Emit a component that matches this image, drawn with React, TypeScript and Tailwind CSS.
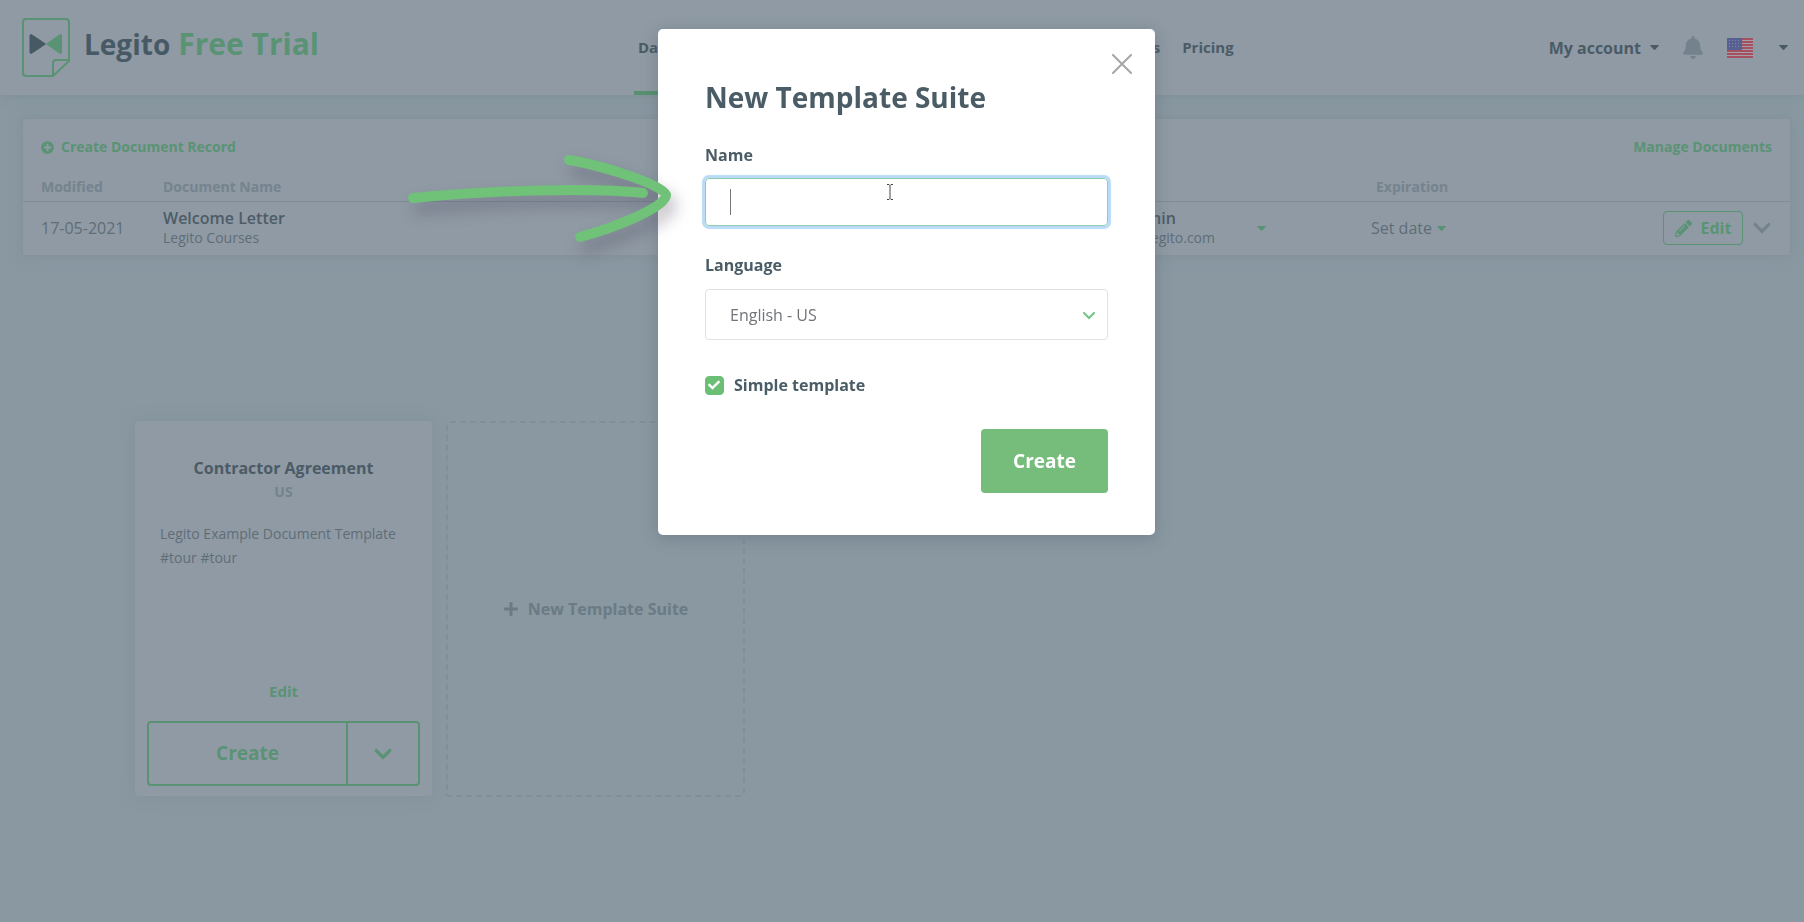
import { useState } from "react";
import { FaBell, FaCheck, FaChevronDown, FaPencilAlt, FaPlus, FaPlusCircle } from "react-icons/fa";

const languages = ["English - US", "English - UK", "Deutsch", "Čeština"];

function Caret({ className }: { className?: string }) {
    return (
        <svg viewBox="0 0 10 6" preserveAspectRatio="none" className={"h-[5px] w-[9px] shrink-0 " + (className ?? "")} fill="currentColor" aria-hidden="true">
            <path d="M0.6 0h8.8c.5 0 .7.6.4.9L5.6 5.6a.8.8 0 0 1-1.2 0L.2.9C-.1.6.1 0 .6 0z" />
        </svg>
    );
}

function Logo() {
    return (
        <a href="#" className="flex items-start">
            <svg viewBox="0 0 48 60" className="h-[60px] w-[48px]" fill="none" aria-hidden="true">
                <path
                    d="M4 1h40a3 3 0 0 1 3 3v39L31 58H4a3 3 0 0 1-3-3V4a3 3 0 0 1 3-3z M47 42H34a3 3 0 0 0-3 3v13"
                    stroke="#5a9374"
                    strokeWidth="2"
                    strokeLinejoin="round"
                />
                <path d="M8 17.500v17a1 1 0 0 0 1.600.800L23.500 26 9.600 16.700A1 1 0 0 0 8 17.500z" fill="#485966" stroke="#485966" strokeLinejoin="round" />
                <path d="M39.500 17.500v17a1 1 0 0 1-1.600.800L24.500 26l13.400-9.300a1 1 0 0 1 1.600.800z" fill="#5a9374" stroke="#5a9374" strokeLinejoin="round" />
            </svg>
            <span className="ml-[14px] flex items-baseline gap-2 text-[28px] leading-[52px] font-bold text-[#485966]">
                Legito <span className="text-[30px] text-[#5a9374]">Free Trial</span>
            </span>
        </a>
    );
}

function UsFlag() {
    return (
        <svg viewBox="0 0 26 20" className="h-[20px] w-[26px]" aria-hidden="true">
            <rect width="26" height="20" fill="#a59daa" />
            {[0, 3, 6, 9, 12, 15, 18].map((y) => (
                <rect key={y} y={y} width="26" height="2" fill="#a4505f" />
            ))}
            <rect width="15" height="12" fill="#566192" />
            {[2, 5, 8].map((y) => (
                <path key={y} d={`M2 ${y + 0.5}h12`} stroke="#7f87a8" strokeDasharray="1 2" />
            ))}
        </svg>
    );
}

function Header() {
    return (
        <header className="flex h-[95px] justify-between bg-[#8f9aa4] pr-[16px] pl-[22px] text-[#4b5b66] shadow-[0_2px_10px_#80919a]">
            <div className="pt-[18px]">
                <Logo />
            </div>
            <nav className="flex items-stretch text-[15px] font-bold">
                <a href="#" className="mr-4 border-b-4 border-[#58906f] px-1 pt-[36px]">Dashboard</a>
                <div className="flex w-[494px] justify-end gap-[22px] pt-[36px]">
                    <a href="#">Documents</a>
                    <a href="#">Templates</a>
                    <a href="#">Pricing</a>
                </div>
            </nav>
            <div className="flex h-[95px] items-center">
                <button className="flex items-center gap-[9px] text-base font-bold">
                    My account <Caret />
                </button>
                <button aria-label="Notifications" className="ml-6 text-[#74828d]">
                    <FaBell className="h-[23px] w-[20px]" />
                </button>
                <button aria-label="Change language" className="ml-6 flex items-center gap-[26px]">
                    <UsFlag /> <Caret />
                </button>
            </div>
        </header>
    );
}

function Documents() {
    return (
        <section className="mt-[23px] mr-[13px] ml-[22px] rounded-[3px] border border-[#87939c] bg-[#8f9aa4] shadow-[0_0_14px_#80919a]">
            <div className="flex h-[56px] items-center justify-between px-[18px] text-sm font-bold text-[#5a9374]">
                <button className="flex items-center gap-[7px]">
                    <FaPlusCircle className="size-[13px]" /> Create Document Record
                </button>
                <a href="#">Manage Documents</a>
            </div>
            <table className="w-full table-fixed text-left">
                <thead>
                    <tr className="h-[26px] border-b border-[#7f8b96] align-top text-sm leading-5 text-[#75838e]">
                        <th className="w-[140px] pt-[2px] pl-[18px] font-bold">Modified</th>
                        <th className="pt-[2px] font-bold">Document Name</th>
                        <th className="w-[152px]"></th>
                        <th className="w-[156px]"></th>
                        <th className="w-[160px] pt-[2px] pl-[5px] font-bold">Expiration</th>
                        <th className="w-[259px]"></th>
                    </tr>
                </thead>
                <tbody>
                    <tr className="h-[54px] text-[#5f6d78]">
                        <td className="pl-[18px] text-base">17-05-2021</td>
                        <td>
                            <div className="text-base leading-5 font-semibold text-[#4d5c67]">Welcome Letter</div>
                            <div className="text-sm leading-5">Legito Courses</div>
                        </td>
                        <td>
                            <div className="text-right">
                                <div className="mr-[39px] text-base leading-5 font-semibold text-[#4d5c67]">Admin</div>
                                <div className="text-sm leading-5">admin@legito.com</div>
                            </div>
                        </td>
                        <td>
                            <button aria-label="Change owner" className="ml-[42px] block text-[#5a9374]">
                                <Caret />
                            </button>
                        </td>
                        <td>
                            <button className="flex items-center gap-[5px] text-base">
                                Set date <Caret className="text-[#5a9374]" />
                            </button>
                        </td>
                        <td className="pr-[18px]">
                            <div className="flex items-center justify-end gap-[9px]">
                                <button className="flex h-[34px] w-[80px] items-center justify-center gap-[9px] rounded-[4px] border border-[#5a9374] text-base font-bold text-[#5a9374]">
                                    <FaPencilAlt className="size-[17px]" /> Edit
                                </button>
                                <button aria-label="Expand" className="text-[#74828d]">
                                    <FaChevronDown className="size-[20px]" />
                                </button>
                            </div>
                        </td>
                    </tr>
                </tbody>
            </table>
        </section>
    );
}

function Suites() {
    return (
        <main className="mt-[165px] ml-[135px] flex gap-[14px]">
            <article className="flex h-[375px] w-[297px] flex-col rounded-[4px] bg-[#8f9aa4] px-[12px] pt-[35px] pb-[10px] shadow-[0_0_16px_#80919a]">
                <h2 className="text-center text-base leading-6 font-bold text-[#4b5b66]">Contractor Agreement</h2>
                <div className="text-center text-sm leading-6 font-bold text-[#74828d]">US</div>
                <p className="mt-[18px] px-[13px] text-sm leading-[24px] text-[#5f6d78]">
                    Legito Example Document Template
                    <br />
                    #tour #tour
                </p>
                <a href="#" className="mt-auto mb-[18px] text-center text-[15px] leading-6 font-bold text-[#5a9374]">Edit</a>
                <div className="flex h-[65px] shrink-0 rounded-[4px] border-2 border-[#5a9374] text-[#5a9374]">
                    <button className="flex-1 text-[19px] font-bold">Create</button>
                    <button aria-label="More options" className="flex w-[72px] items-center justify-center border-l-2 border-[#5a9374]">
                        <FaChevronDown className="size-[20px]" />
                    </button>
                </div>
            </article>
            <button className="flex h-[376px] w-[299px] items-center justify-center gap-[9px] rounded-[4px] border-2 border-dashed border-[#80909a] text-base font-bold text-[#6b7b85]">
                <FaPlus className="size-[16px]" /> New Template Suite
            </button>
        </main>
    );
}

// Hand drawn arrow that points at the name field
function HintArrow() {
    return (
        <svg viewBox="0 0 300 130" className="pointer-events-none absolute top-[115px] left-[-258px] h-[130px] w-[300px]" fill="none" aria-hidden="true">
            <g stroke="#70c278" strokeLinecap="round" className="drop-shadow-[5px_10px_8px_rgba(75,65,90,0.4)]">
                <path d="M13 54C80 47 190 43 243 49" strokeWidth="10" />
                <path d="M169 16C205 22 266 42 266 51C266 64 210 85 180 93" strokeWidth="10" />
            </g>
        </svg>
    );
}

function NewSuiteDialog({ onClose }: { onClose: () => void }) {
    const [name, setName] = useState("");
    const [language, setLanguage] = useState(languages[0]);
    const [simple, setSimple] = useState(true);

    return (
        <div className="fixed inset-0 flex items-start justify-center pt-[29px] pl-[9px]">
            <div
                role="dialog"
                aria-labelledby="suite-title"
                className="relative w-[497px] rounded-[5px] bg-white px-[47px] pt-[48px] pb-[42px] text-[#4a5c66] shadow-[0_3px_16px_rgba(80,95,110,0.4)]"
            >
                <button onClick={onClose} aria-label="Close" className="absolute top-[25px] right-[23px] text-[#a5a5aa]">
                    <svg viewBox="0 0 20 20" className="size-[20px]" stroke="currentColor" strokeWidth="2" strokeLinecap="round">
                        <path d="M1 1l18 18M19 1L1 19" />
                    </svg>
                </button>
                <form onSubmit={(e) => e.preventDefault()}>
                    <h1 id="suite-title" className="text-[28px] leading-[40px] font-bold">New Template Suite</h1>

                    <label htmlFor="suite-name" className="mt-[26px] block text-base leading-6 font-bold">Name</label>
                    <div className="relative mt-[11px]">
                        <input
                            id="suite-name"
                            value={name}
                            onChange={(e) => setName(e.target.value)}
                            className="block h-[48px] w-full rounded-[4px] border border-[#8fcfae] px-6 text-base shadow-[0_0_1px_3px_#b9dbf8] outline-none"
                        />
                        <span className="absolute top-[11px] left-[25px] h-[26px] w-px bg-[#777]"></span>
                        <svg viewBox="0 0 8 16" className="absolute top-[6px] left-[181px] h-[16px] w-[8px]" stroke="#444" fill="none" aria-hidden="true">
                            <path d="M1 .5h2l1 1 1-1h2M4 1.500v13M1 15.500h2l1-1 1 1h2" />
                        </svg>
                    </div>

                    <label htmlFor="suite-language" className="mt-[27px] block text-base leading-6 font-bold">Language</label>
                    <div className="relative mt-[12px]">
                        <select
                            id="suite-language"
                            value={language}
                            onChange={(e) => setLanguage(e.target.value)}
                            className="block h-[51px] w-full appearance-none rounded-[4px] border border-[#e2e2e2] bg-white px-6 text-base text-[#707478] outline-none"
                        >
                            {languages.map((item) => (
                                <option key={item}>{item}</option>
                            ))}
                        </select>
                        <svg viewBox="0 0 12 8" className="pointer-events-none absolute top-[23px] right-[13px] h-[8px] w-[12px]" stroke="#74c285" strokeWidth="2" fill="none" strokeLinecap="round" aria-hidden="true">
                            <path d="M1 1l5 5 5-5" />
                        </svg>
                    </div>

                    <div className="mt-[33px] flex items-center gap-[10px]">
                        <span className="relative flex size-[19px]">
                            <input
                                id="suite-simple"
                                type="checkbox"
                                checked={simple}
                                onChange={(e) => setSimple(e.target.checked)}
                                className="size-[19px] appearance-none rounded-[4px] border border-[#6abf74] checked:bg-[#6abf74]"
                            />
                            {simple && <FaCheck className="pointer-events-none absolute top-[3px] left-[3px] size-[12px] text-white" />}
                        </span>
                        <label htmlFor="suite-simple" className="text-base leading-6 font-bold">Simple template</label>
                    </div>

                    <div className="mt-[32px] flex justify-end">
                        <button type="submit" className="h-[64px] w-[127px] rounded-[4px] bg-[#76bd7b] text-[19px] font-bold text-white">Create</button>
                    </div>
                </form>
                <HintArrow />
            </div>
        </div>
    );
}

export default function App() {
    const [open, setOpen] = useState(true);

    return (
        <div className="min-h-screen bg-[#8998a1] font-['Open_Sans',sans-serif]">
            <Header />
            <Documents />
            <Suites />
            {open && <NewSuiteDialog onClose={() => setOpen(false)} />}
        </div>
    );
}
